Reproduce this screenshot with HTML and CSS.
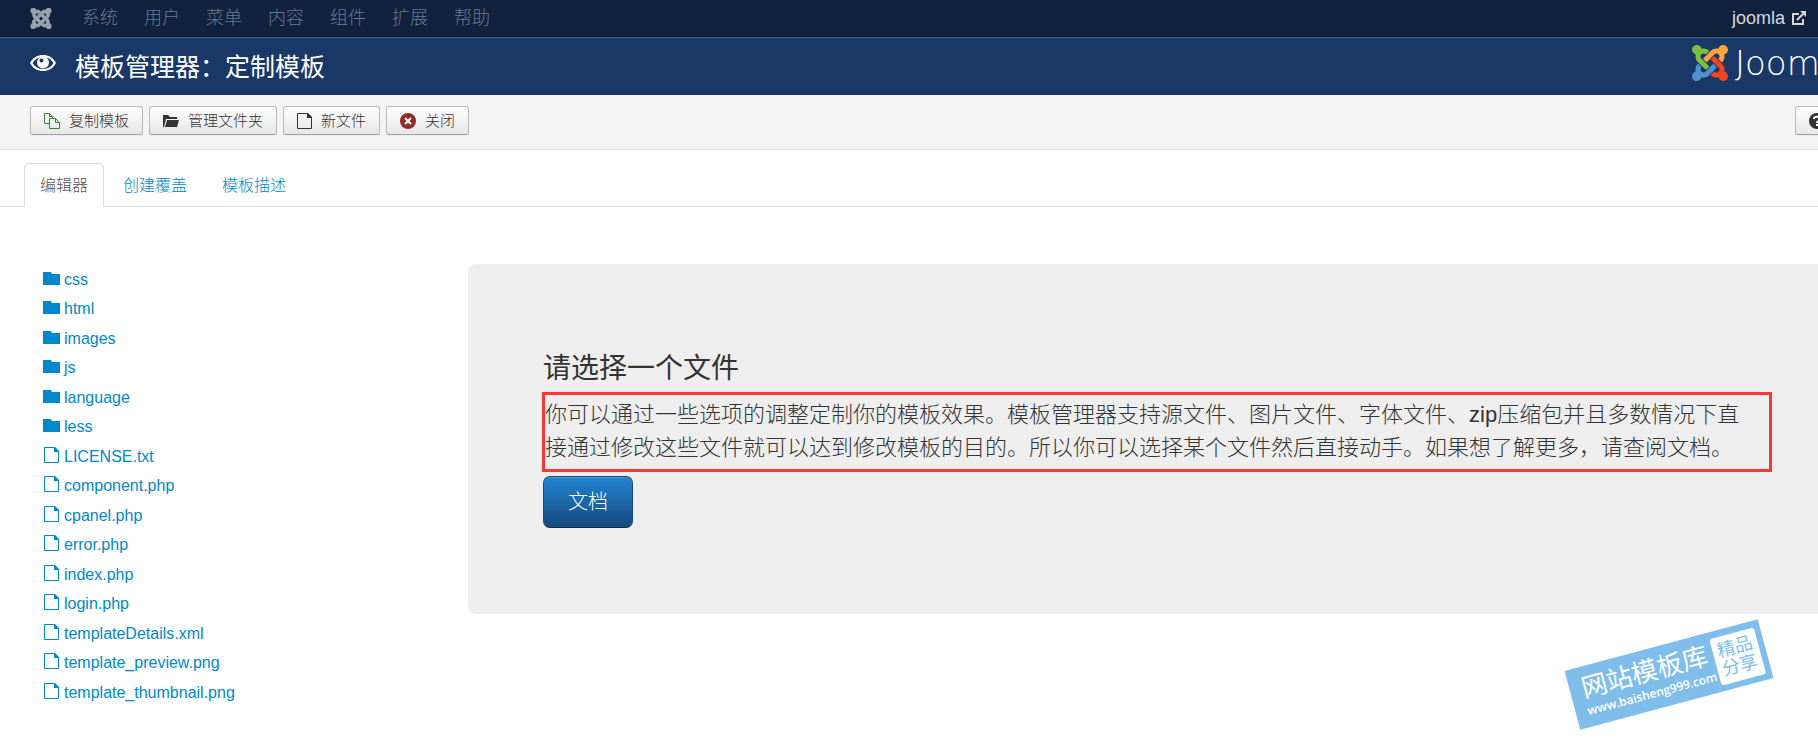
FILE: index.html
```html
<!doctype html>
<html lang="zh-CN">

<head>
    <meta charset="UTF-8">
    <title>模板管理器：定制模板</title>
    <link rel="stylesheet" href="styles.css">
</head>

<body>
    <svg class="sprite" aria-hidden="true">
        <symbol id="joomla-arm" viewBox="0 0 24 24">
            <path d="M16.719 14.759L14.22 17.26l-2.37 2.37-.462.466c-1.368 1.365-3.297 1.83-5.047 1.397-.327 1.424-1.604 2.49-3.13 2.49C1.438 23.983 0 22.547 0 20.772c0-1.518 1.055-2.789 2.469-3.123-.446-1.76.016-3.705 1.396-5.08l.179-.18 2.37 2.37-.184.181c-.769.779-.769 2.024 0 2.789.771.78 2.022.78 2.787 0l.465-.465 2.367-2.371 2.502-2.506z" />
        </symbol>
        <symbol id="folder" viewBox="0 0 17 13">
            <path d="M0 0h8l1 2h8v11H0z" />
        </symbol>
        <symbol id="file" viewBox="0 0 15 16">
            <path d="M.5 .5h10l4 4v11h-14z" fill="none" stroke="currentColor" />
            <path d="M10 0h1l4 4v1h-5z" />
        </symbol>
    </svg>
    <nav class="navbar">
        <a class="brand" href="#" aria-label="Joomla">
            <svg width="22" height="21" viewBox="0 0 24 24">
                <use href="#joomla-arm" />
                <use href="#joomla-arm" transform="rotate(90 12 12)" />
                <use href="#joomla-arm" transform="rotate(180 12 12)" />
                <use href="#joomla-arm" transform="rotate(270 12 12)" />
            </svg>
        </a>
        <ul class="menu">
            <li><a href="#">系统</a></li>
            <li><a href="#">用户</a></li>
            <li><a href="#">菜单</a></li>
            <li><a href="#">内容</a></li>
            <li><a href="#">组件</a></li>
            <li><a href="#">扩展</a></li>
            <li><a href="#">帮助</a></li>
        </ul>
        <a class="site-link" href="#">joomla
            <svg width="14" height="14" viewBox="0 0 14 14">
                <path d="M7 3H1v10h10V8" fill="none" stroke="currentColor" stroke-width="2" />
                <path d="M5 9l7-7" fill="none" stroke="currentColor" stroke-width="2" />
                <path d="M8 0h6v6z" />
            </svg>
        </a>
    </nav>
    <div class="page">
        <header class="header">
            <svg width="26" height="18" viewBox="0 0 26 18">
                <path fill-rule="evenodd" d="M0 9C3 3 8 1 13 1s10 2 13 8c-3 6-8 8-13 8S3 15 0 9zm2.500 0c2.500 4 6 6 10.500 6s8-2 10.500-6C21 5 17.500 3 13 3S5 5 2.500 9z" />
                <path fill-rule="evenodd" d="M13 2.500a6 6 0 1 1 0 12 6 6 0 0 1 0-12zm-1.500 2a2 2 0 1 0 0 4 2 2 0 0 0 0-4z" />
            </svg>
            <h1>模板管理器：定制模板</h1>
            <a class="logo" href="#">
                <svg width="36" height="36" viewBox="0 0 24 24">
                    <use class="blue" href="#joomla-arm" />
                    <use class="green" href="#joomla-arm" transform="rotate(90 12 12)" />
                    <use class="orange" href="#joomla-arm" transform="rotate(180 12 12)" />
                    <use class="red" href="#joomla-arm" transform="rotate(270 12 12)" />
                </svg>
                <span>Joomla!</span>
            </a>
        </header>
        <div class="toolbar">
            <button class="btn" type="button">
                <svg class="copy" width="16" height="16" viewBox="0 0 16 16">
                    <path d="M5.500 10.500h-5V.5h5l3 3v2M5.500 .5v3h3" fill="none" stroke="currentColor" />
                    <path d="M6.500 5.500h5l4 4v6h-10v-10zM11.500 5.500v4h4" fill="none" stroke="currentColor" />
                </svg>复制模板
            </button>
            <button class="btn" type="button">
                <svg width="16" height="16" viewBox="0 0 16 16">
                    <path d="M0 2h5l2 2h7v2H3L1 14H0z" />
                    <path d="M4 7h12l-2 7H2z" />
                </svg>管理文件夹
            </button>
            <button class="btn" type="button">
                <svg width="15" height="16"><use href="#file" /></svg>新文件
            </button>
            <button class="btn" type="button">
                <svg class="close" width="16" height="16" viewBox="0 0 16 16">
                    <circle cx="8" cy="8" r="8" />
                    <path d="M5 5l6 6M11 5l-6 6" stroke="#fff" stroke-width="2" />
                </svg>关闭
            </button>
            <button class="btn help" type="button">
                <svg width="16" height="16" viewBox="0 0 16 16">
                    <circle cx="8" cy="8" r="8" />
                    <path d="M5 6c0-3 6-3 6 0 0 2-3 1.500-3 4M8 11v2" fill="none" stroke="#fff" stroke-width="2" />
                </svg>帮助
            </button>
        </div>
        <ul class="tabs">
            <li><a class="active" href="#">编辑器</a></li>
            <li><a href="#">创建覆盖</a></li>
            <li><a href="#">模板描述</a></li>
        </ul>
        <main class="content">
            <ul class="tree">
                <li><a href="#"><svg width="17" height="13"><use href="#folder" /></svg>css</a></li>
                <li><a href="#"><svg width="17" height="13"><use href="#folder" /></svg>html</a></li>
                <li><a href="#"><svg width="17" height="13"><use href="#folder" /></svg>images</a></li>
                <li><a href="#"><svg width="17" height="13"><use href="#folder" /></svg>js</a></li>
                <li><a href="#"><svg width="17" height="13"><use href="#folder" /></svg>language</a></li>
                <li><a href="#"><svg width="17" height="13"><use href="#folder" /></svg>less</a></li>
                <li><a href="#"><svg width="17" height="16"><use href="#file" /></svg>LICENSE.txt</a></li>
                <li><a href="#"><svg width="17" height="16"><use href="#file" /></svg>component.php</a></li>
                <li><a href="#"><svg width="17" height="16"><use href="#file" /></svg>cpanel.php</a></li>
                <li><a href="#"><svg width="17" height="16"><use href="#file" /></svg>error.php</a></li>
                <li><a href="#"><svg width="17" height="16"><use href="#file" /></svg>index.php</a></li>
                <li><a href="#"><svg width="17" height="16"><use href="#file" /></svg>login.php</a></li>
                <li><a href="#"><svg width="17" height="16"><use href="#file" /></svg>templateDetails.xml</a></li>
                <li><a href="#"><svg width="17" height="16"><use href="#file" /></svg>template_preview.png</a></li>
                <li><a href="#"><svg width="17" height="16"><use href="#file" /></svg>template_thumbnail.png</a></li>
            </ul>
            <section class="hero">
                <h2>请选择一个文件</h2>
                <p>你可以通过一些选项的调整定制你的模板效果。模板管理器支持源文件、图片文件、字体文件、zip压缩包并且多数情况下直<br>接通过修改这些文件就可以达到修改模板的目的。所以你可以选择某个文件然后直接动手。如果想了解更多，请查阅文档。</p>
                <a class="btn-doc" href="#">文档</a>
            </section>
        </main>
    </div>
    <div class="stamp">
        <div class="stamp-text">
            <strong>网站模板库</strong>
            <span>www.baisheng999.com</span>
        </div>
        <div class="stamp-badge">精品<br>分享</div>
    </div>
</body>

</html>
```
FILE: styles.css
```css
* {
    margin: 0;
    padding: 0;
    box-sizing: border-box;
}

body {
    position: relative;
    min-height: 100vh;
    overflow: hidden;
    font: 16px/20px "Liberation Sans", "Noto Sans CJK SC", sans-serif;
    font-weight: 300;
    color: #333;
    background-color: #fff;
}

ul {
    list-style: none;
}

a {
    color: #08c;
    text-decoration: none;
}

svg {
    flex: none;
    fill: currentColor;
}

.sprite {
    display: none;
}

.navbar {
    display: flex;
    align-items: center;
    height: 37px;
    padding: 0 12px 0 30px;
    background-color: #10223e;
    border-bottom: 1px solid #0b1629;
    font-size: 18px;
}

.navbar .brand {
    display: flex;
    margin-right: 30px;
    color: #9ba3af;
}

/* 小图标线条加粗 */
.navbar .brand svg {
    stroke: currentColor;
    stroke-width: 1px;
}

.menu {
    display: flex;
    gap: 26px;
}

.menu a {
    color: #6b788c;
}

.site-link {
    display: flex;
    align-items: center;
    gap: 7px;
    margin-left: auto;
    color: #d9d9d9;
}

/* 页面比窗口宽，右侧超出部分隐藏 */
.page {
    width: calc(100% + 90px);
}

.header {
    display: flex;
    align-items: center;
    height: 58px;
    padding: 0 0 8px 30px;
    background-color: #1a3867;
    border-top: 1px solid #4a6085;
    color: #fff;
}

.header h1 {
    margin-left: 19px;
    padding-top: 8px;
    font-size: 25px;
    font-weight: 400;
    line-height: 30px;
}

.logo {
    display: flex;
    align-items: center;
    gap: 7px;
    width: 216px;
    margin-left: auto;
    color: #fff;
    font: 200 34px/36px "DejaVu Sans", sans-serif;
}

.logo .blue {
    fill: #5091cd;
}

.logo .green {
    fill: #7ac143;
}

.logo .orange {
    fill: #f9a541;
}

.logo .red {
    fill: #f44321;
}

.toolbar {
    display: flex;
    gap: 6px;
    padding: 11px 30px 14px;
    background-color: #f4f4f4;
    border-bottom: 1px solid #e3e3e3;
}

.btn {
    display: flex;
    align-items: center;
    gap: 9px;
    height: 29px;
    padding: 0 13px;
    border: 1px solid #bbb;
    border-bottom-color: #a2a2a2;
    border-radius: 3px;
    background-image: linear-gradient(#fff, #e6e6e6);
    box-shadow: 0 1px 2px rgba(0, 0, 0, 0.05);
    font: inherit;
    font-size: 15px;
    color: #333;
    cursor: pointer;
}

.btn .copy {
    color: #378137;
}

.btn .close {
    color: #942a25;
}

.btn.help {
    margin-left: auto;
}

.tabs {
    display: flex;
    gap: 3px;
    padding: 13px 24px 0;
    border-bottom: 1px solid #ddd;
}

.tabs a {
    display: block;
    margin-bottom: -1px;
    padding: 11px 15px 10px;
    border: 1px solid transparent;
    border-bottom: 0;
    border-radius: 5px 5px 0 0;
    line-height: 22px;
}

.tabs a.active {
    background-color: #fff;
    border-color: #ddd;
    color: #555;
}

.content {
    display: flex;
    align-items: flex-start;
    padding: 57px 24px 0 43px;
}

.tree {
    width: 425px;
    flex: none;
    padding-top: 1px;
}

.tree a {
    display: flex;
    align-items: center;
    gap: 4px;
    height: 29px;
}

.tree svg {
    margin-bottom: 3px;
}

.tree li:nth-child(even) {
    padding-bottom: 1px;
}

.hero {
    flex: 1;
    padding: 82px 112px 86px 74px;
    background-color: #eee;
    border-radius: 8px;
}

.hero h2 {
    padding-left: 1px;
    font-size: 28px;
    font-weight: 400;
    line-height: 46px;
}

.hero p {
    margin-bottom: 4px;
    padding: 3px 0 5px;
    border: 3px solid #ff3535;
    font-size: 22px;
    line-height: 33px;
    white-space: nowrap;
}

.btn-doc {
    display: inline-block;
    margin-left: 1px;
    padding: 0 24px;
    border: 1px solid #15497c;
    border-bottom-color: #0d2d4d;
    border-radius: 7px;
    background-image: linear-gradient(#2384d3, #15497c);
    box-shadow: inset 0 1px 0 rgba(255, 255, 255, 0.2);
    font-size: 20px;
    line-height: 50px;
    color: #fff;
}

/* 右下角水印 */
.stamp {
    position: absolute;
    top: 644px;
    right: 49px;
    display: flex;
    align-items: center;
    gap: 2px;
    width: 200px;
    height: 61px;
    padding-left: 12px;
    background-color: #7fbeeb;
    color: #fff;
    transform: rotate(-15deg);
}

.stamp-text strong {
    display: block;
    font-size: 26px;
    font-weight: 400;
    line-height: 28px;
}

.stamp-text span {
    display: block;
    font: 600 12px/18px "Open Sans", sans-serif;
}

.stamp-badge {
    padding: 5px;
    border-radius: 3px;
    background-color: #fff;
    color: #7fbeeb;
    font-size: 18px;
    font-weight: 400;
    line-height: 19px;
}
```
